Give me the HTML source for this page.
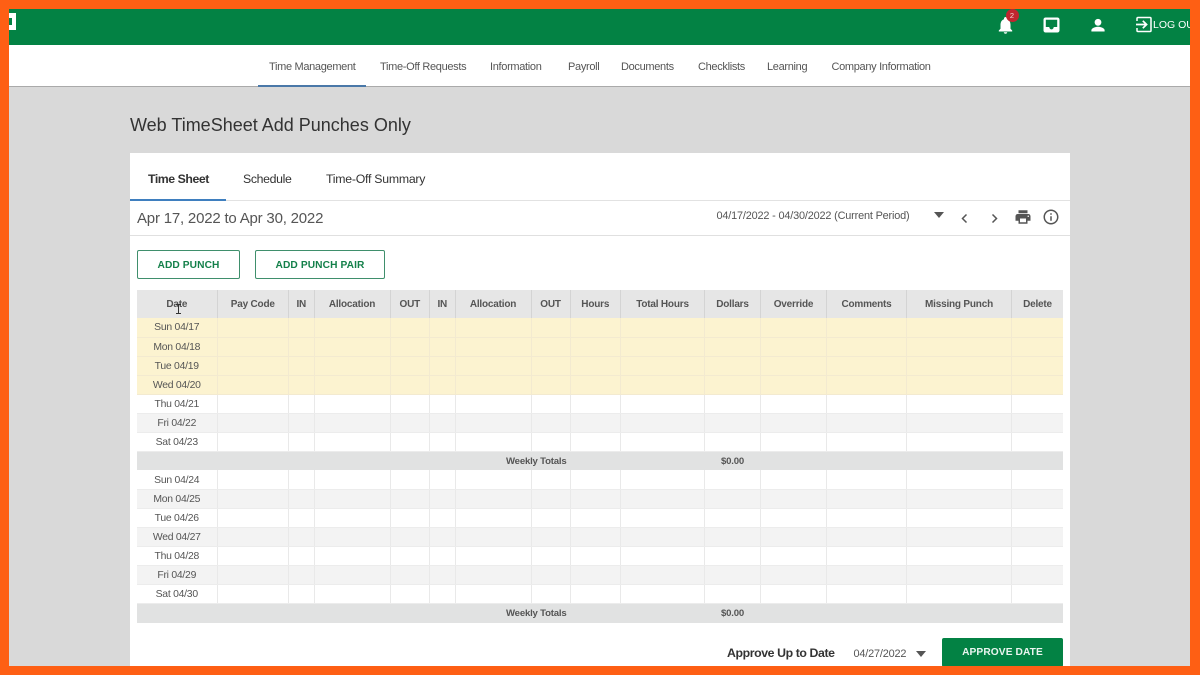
<!DOCTYPE html>
<html><head><meta charset="utf-8">
<style>
html,body{margin:0;padding:0;width:1200px;height:675px;overflow:hidden;background:#fe5f14;font-family:"Liberation Sans",sans-serif;}
#frame{position:absolute;left:9px;top:9px;width:1181px;height:657px;overflow:hidden;background:#d9d9d9;}
#in{position:absolute;left:-9px;top:-9px;width:1200px;height:675px;filter:blur(.35px);}
.a{position:absolute;white-space:nowrap;}
.nav{top:60.5px;font-size:11px;color:#555;line-height:13px;letter-spacing:-.32px;}
.tab{top:172px;font-size:12.3px;line-height:14px;color:#333;letter-spacing:-.25px;}
table{position:absolute;left:137px;top:290px;width:926px;border-collapse:collapse;table-layout:fixed;font-size:10px;color:#555;}
th{height:28px;padding:0;background:#e6e6e6;border-left:1px solid #d4d4d4;font-size:10px;letter-spacing:-.2px;color:#555;text-align:center;}
td{height:19.06px;padding:1px 0 0;border-left:1px solid #e9e9e9;border-bottom:1px solid #ececec;text-align:center;box-sizing:border-box;font-size:10.4px;letter-spacing:-.25px;}
tr>*:first-child{border-left:0;}
tr.y td{background:#fcf3d0;border-color:#f3ead0;}
tr.g td{background:#f3f3f3;}
tr.t td{background:#e1e2e2;border:0;font-weight:bold;font-size:9.6px;letter-spacing:-.2px;color:#555;}
.btn{box-sizing:border-box;border:1px solid #3f8f6c;border-radius:2px;text-align:center;color:#14804a;font-weight:bold;font-size:10.2px;background:#fff;letter-spacing:.1px;}
.wt{position:absolute;left:369px;top:4px;}
</style></head><body>
<div id="frame"><div id="in">
<div class="a" style="left:0;top:9px;width:1200px;height:36px;background:#038244;"></div>
<div class="a" style="left:9px;top:13px;width:7px;height:17px;background:#fff;"></div>
<div class="a" style="left:9px;top:18px;width:3px;height:7px;background:#038244;"></div>

<svg class="a" style="left:997px;top:16px" width="17" height="18" viewBox="0 0 17 18"><path fill="#fff" d="M8.500 1C7.600 1 7 1.700 7 2.600v.6C4.500 4 3.500 6.200 3.500 9v3.700L1.800 14.500V15.500h13.400v-1L13.500 12.700V9c0-2.800-1-5-3.500-5.800v-.6C10 1.700 9.400 1 8.500 1z"/><path fill="#fff" d="M6.800 16.200c0 .9.800 1.500 1.700 1.500s1.700-.6 1.700-1.500z"/></svg>
<div class="a" style="left:1005.500px;top:8.500px;width:13px;height:13px;border-radius:50%;background:#c0252f;color:#f5d5d5;font-size:7.500px;line-height:13px;text-align:center;">2</div>
<svg class="a" style="left:1042px;top:16px" width="19" height="18" viewBox="0 0 19 18"><path fill="#fff" fill-rule="evenodd" d="M3.500 1.500h12c1.100 0 2 .9 2 2v11c0 1.100-.9 2-2 2h-12c-1.100 0-2-.9-2-2v-11c0-1.100.9-2 2-2zM3.800 3.800V11h3.500c0 1.300 1 2.400 2.200 2.400s2.200-1.100 2.200-2.400h3.500V3.800z"/></svg>
<svg class="a" style="left:1089px;top:17px" width="18" height="16" viewBox="0 0 18 16"><circle cx="9" cy="5.300" r="3.400" fill="#fff"/><path fill="#fff" d="M2.400 14.500v-1.300c0-2.400 4.400-3.500 6.600-3.500s6.600 1.100 6.600 3.500v1.300z"/></svg>
<svg class="a" style="left:1134px;top:15px" width="19" height="19" viewBox="0 0 19 19"><path fill="none" stroke="#fff" stroke-width="1.500" d="M3 6V3.500c0-.6.400-1 1-1h12c.6 0 1 .4 1 1v12c0 .6-.4 1-1 1H4c-.6 0-1-.4-1-1V13"/><path fill="none" stroke="#fff" stroke-width="1.700" d="M2 9.500h10M8.800 5.800l3.800 3.700-3.800 3.700"/></svg>
<div class="a" style="left:1153px;top:18.500px;font-size:10.500px;line-height:13px;color:#fff;">LOG OUT</div>

<div class="a" style="left:0;top:45px;width:1200px;height:42px;background:#fff;border-bottom:1px solid #aaa;box-sizing:border-box;"></div>
<div class="a" style="left:258px;top:85px;width:108px;height:2px;background:#4a78a8;"></div>
<div class="a nav" style="left:269px;">Time Management</div>
<div class="a nav" style="left:380px;">Time-Off Requests</div>
<div class="a nav" style="left:490px;">Information</div>
<div class="a nav" style="left:568px;">Payroll</div>
<div class="a nav" style="left:621px;">Documents</div>
<div class="a nav" style="left:698px;">Checklists</div>
<div class="a nav" style="left:767px;">Learning</div>
<div class="a nav" style="left:831.500px;">Company Information</div>

<div class="a" style="left:130px;top:115px;font-size:18px;line-height:21px;color:#333;">Web TimeSheet Add Punches Only</div>

<div class="a" style="left:130px;top:153px;width:940px;height:530px;background:#fff;"></div>
<div class="a" style="left:130px;top:200px;width:940px;height:1px;background:#e2e2e2;"></div>
<div class="a" style="left:130px;top:198.500px;width:96px;height:2px;background:#3f7fbf;"></div>
<div class="a" style="left:130px;top:235px;width:940px;height:1px;background:#e0e0e0;"></div>
<div class="a tab" style="left:148px;font-weight:bold;letter-spacing:-.45px;">Time Sheet</div>
<div class="a tab" style="left:243px;letter-spacing:-.35px;">Schedule</div>
<div class="a tab" style="left:326px;">Time-Off Summary</div>
<div class="a" style="left:137px;top:210px;font-size:15px;line-height:18px;color:#555;letter-spacing:-.2px;">Apr 17, 2022 to Apr 30, 2022</div>
<div class="a" style="left:716.500px;top:210px;font-size:10.900px;line-height:13px;color:#555;letter-spacing:-.17px;">04/17/2022 - 04/30/2022 (Current Period)</div>
<div class="a" style="left:934px;top:212px;width:0;height:0;border-left:5.500px solid transparent;border-right:5.500px solid transparent;border-top:6px solid #555;"></div>
<svg class="a" style="left:955px;top:209px" width="18" height="18" viewBox="0 0 18 18"><path fill="none" stroke="#555" stroke-width="1.500" d="M11.500 5.500 7.500 9.500l4 4"/></svg>
<svg class="a" style="left:985px;top:209px" width="18" height="18" viewBox="0 0 18 18"><path fill="none" stroke="#555" stroke-width="1.500" d="M7.500 5.500l4 4-4 4"/></svg>
<svg class="a" style="left:1014px;top:208px" width="18" height="18" viewBox="0 0 24 24"><path fill="#555" d="M19 8H5c-1.660 0-3 1.340-3 3v6h4v4h12v-4h4v-6c0-1.660-1.340-3-3-3zm-3 11H8v-5h8v5zm3-7c-.550 0-1-.450-1-1s.450-1 1-1 1 .450 1 1-.450 1-1 1zm-1-9H6v4h12V3z"/></svg>
<svg class="a" style="left:1042px;top:208px" width="18" height="18" viewBox="0 0 24 24"><path fill="#555" d="M11 7h2v2h-2zm0 4h2v6h-2zm1-9C6.480 2 2 6.480 2 12s4.480 10 10 10 10-4.480 10-10S17.520 2 12 2zm0 18c-4.410 0-8-3.590-8-8s3.590-8 8-8 8 3.590 8 8-3.590 8-8 8z"/></svg>

<div class="a btn" style="left:137px;top:250px;width:103px;height:29px;line-height:29px;">ADD PUNCH</div>
<div class="a btn" style="left:255px;top:250px;width:130px;height:29px;line-height:29px;">ADD PUNCH PAIR</div>

<table>
<colgroup><col style="width:80px"><col style="width:71.500px"><col style="width:25.500px"><col style="width:76px"><col style="width:39.500px"><col style="width:25.500px"><col style="width:76px"><col style="width:39px"><col style="width:50.500px"><col style="width:84px"><col style="width:56px"><col style="width:66px"><col style="width:80px"><col style="width:105px"><col style="width:51.500px"></colgroup>
<tr><th>Date</th><th>Pay Code</th><th>IN</th><th>Allocation</th><th>OUT</th><th>IN</th><th>Allocation</th><th>OUT</th><th>Hours</th><th>Total Hours</th><th>Dollars</th><th>Override</th><th>Comments</th><th>Missing Punch</th><th>Delete</th></tr>
<tr class="y"><td>Sun 04/17</td><td></td><td></td><td></td><td></td><td></td><td></td><td></td><td></td><td></td><td></td><td></td><td></td><td></td><td></td></tr>
<tr class="y"><td>Mon 04/18</td><td></td><td></td><td></td><td></td><td></td><td></td><td></td><td></td><td></td><td></td><td></td><td></td><td></td><td></td></tr>
<tr class="y"><td>Tue 04/19</td><td></td><td></td><td></td><td></td><td></td><td></td><td></td><td></td><td></td><td></td><td></td><td></td><td></td><td></td></tr>
<tr class="y"><td>Wed 04/20</td><td></td><td></td><td></td><td></td><td></td><td></td><td></td><td></td><td></td><td></td><td></td><td></td><td></td><td></td></tr>
<tr><td>Thu 04/21</td><td></td><td></td><td></td><td></td><td></td><td></td><td></td><td></td><td></td><td></td><td></td><td></td><td></td><td></td></tr>
<tr class="g"><td>Fri 04/22</td><td></td><td></td><td></td><td></td><td></td><td></td><td></td><td></td><td></td><td></td><td></td><td></td><td></td><td></td></tr>
<tr><td>Sat 04/23</td><td></td><td></td><td></td><td></td><td></td><td></td><td></td><td></td><td></td><td></td><td></td><td></td><td></td><td></td></tr>
<tr class="t"><td colspan="9" style="position:relative;padding:0;"><span class="wt">Weekly Totals</span></td><td></td><td>$0.00</td><td colspan="4"></td></tr>
<tr><td>Sun 04/24</td><td></td><td></td><td></td><td></td><td></td><td></td><td></td><td></td><td></td><td></td><td></td><td></td><td></td><td></td></tr>
<tr class="g"><td>Mon 04/25</td><td></td><td></td><td></td><td></td><td></td><td></td><td></td><td></td><td></td><td></td><td></td><td></td><td></td><td></td></tr>
<tr><td>Tue 04/26</td><td></td><td></td><td></td><td></td><td></td><td></td><td></td><td></td><td></td><td></td><td></td><td></td><td></td><td></td></tr>
<tr class="g"><td>Wed 04/27</td><td></td><td></td><td></td><td></td><td></td><td></td><td></td><td></td><td></td><td></td><td></td><td></td><td></td><td></td></tr>
<tr><td>Thu 04/28</td><td></td><td></td><td></td><td></td><td></td><td></td><td></td><td></td><td></td><td></td><td></td><td></td><td></td><td></td></tr>
<tr class="g"><td>Fri 04/29</td><td></td><td></td><td></td><td></td><td></td><td></td><td></td><td></td><td></td><td></td><td></td><td></td><td></td><td></td></tr>
<tr><td>Sat 04/30</td><td></td><td></td><td></td><td></td><td></td><td></td><td></td><td></td><td></td><td></td><td></td><td></td><td></td><td></td></tr>
<tr class="t"><td colspan="9" style="position:relative;padding:0;"><span class="wt">Weekly Totals</span></td><td></td><td>$0.00</td><td colspan="4"></td></tr>
</table>

<svg class="a" style="left:175px;top:304px" width="7" height="11" viewBox="0 0 7 11"><path fill="none" stroke="#333" stroke-width="1" d="M1 .500h5M3.500 .500v9M1 9.500h5"/></svg>

<div class="a" style="left:727px;top:646px;font-size:12.300px;line-height:15px;font-weight:bold;color:#333;letter-spacing:-.4px;">Approve Up to Date</div>
<div class="a" style="left:853.500px;top:647.500px;font-size:10.900px;line-height:13px;color:#555;letter-spacing:-.17px;">04/27/2022</div>
<div class="a" style="left:916px;top:651px;width:0;height:0;border-left:5.500px solid transparent;border-right:5.500px solid transparent;border-top:6px solid #555;"></div>
<div class="a" style="left:942px;top:638px;width:121px;height:28px;background:#038244;border-radius:2px;color:#eaf5ef;font-weight:bold;font-size:10.200px;text-align:center;line-height:28px;padding-top:1px;letter-spacing:.1px;">APPROVE DATE</div>
</div></div>
</body></html>
